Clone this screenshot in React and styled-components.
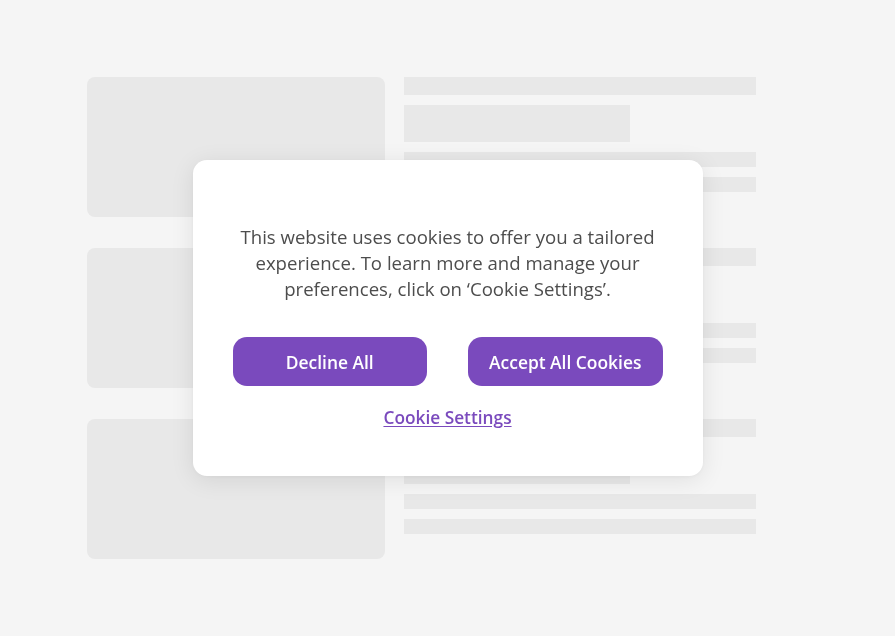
import React from "react";
import styled, { createGlobalStyle } from "styled-components";

const GlobalStyle = createGlobalStyle`
  html, body {
    margin: 0;
    padding: 0;
    background: #f5f5f5;
    font-family: "Open Sans", "Noto Sans", sans-serif;
  }
  * { box-sizing: border-box; }
`;

const Page = styled.div`
  min-height: 636px;
  display: flex;
  align-items: flex-start;
  padding: 77px 0 0 87px;
`;

const Skeleton = styled.div`
  width: 669px;
  display: grid;
  grid-template-columns: 298px 352px;
  column-gap: 19px;
  row-gap: 31px;
`;

const CardBlock = styled.div`
  height: 140px;
  background: #e8e8e8;
  border-radius: 8px;
`;

const Lines = styled.div`
  display: flex;
  flex-direction: column;
  gap: 10px;
`;

const Bar = styled.div`
  height: ${(p) => p.$h}px;
  width: ${(p) => p.$w || "100%"};
  background: #e8e8e8;
`;

const Overlay = styled.div`
  position: fixed;
  inset: 0;
  display: flex;
  align-items: center;
  justify-content: center;
`;

const Modal = styled.div`
  width: 510px;
  background: #ffffff;
  border-radius: 14px;
  box-shadow: 0 4px 24px rgba(0, 0, 0, 0.09), 0 1px 4px rgba(0, 0, 0, 0.04);
  padding: 64px 40px 45px;
  display: flex;
  flex-direction: column;
  align-items: center;
`;

const Message = styled.p`
  margin: 0;
  font-size: 18.6px;
  line-height: 26px;
  color: #4d4d4d;
  text-align: center;
`;

const Actions = styled.div`
  margin-top: 35px;
  width: 100%;
  display: grid;
  grid-template-columns: 1fr 1fr;
  gap: 41px;
`;

const Button = styled.button`
  height: 49px;
  border: none;
  border-radius: 14px;
  background: #7a4abd;
  color: #ffffff;
  font-family: "Open Sans", "Noto Sans", sans-serif;
  font-size: 17.4px;
  font-weight: 600;
  cursor: pointer;
`;

const SettingsLink = styled.a`
  margin-top: 19px;
  font-size: 17.3px;
  line-height: 26px;
  font-weight: 600;
  color: #7a4abd;
  text-decoration: underline;
  text-underline-offset: 2px;
  cursor: pointer;
`;

const Row = () => (
  <>
    <CardBlock />
    <Lines>
      <Bar $h={18} />
      <Bar $h={37} $w="226px" />
      <Bar $h={15} />
      <Bar $h={15} />
    </Lines>
  </>
);

export default function App() {
  return (
    <>
      <GlobalStyle />
      <Page>
        <Skeleton>
          <Row />
          <Row />
          <Row />
        </Skeleton>
      </Page>
      <Overlay>
        <Modal>
          <Message>
            This website uses cookies to offer you a tailored experience. To learn more and manage your
            preferences, click on ‘Cookie Settings’.
          </Message>
          <Actions>
            <Button>Decline All</Button>
            <Button>Accept All Cookies</Button>
          </Actions>
          <SettingsLink>Cookie Settings</SettingsLink>
        </Modal>
      </Overlay>
    </>
  );
}
